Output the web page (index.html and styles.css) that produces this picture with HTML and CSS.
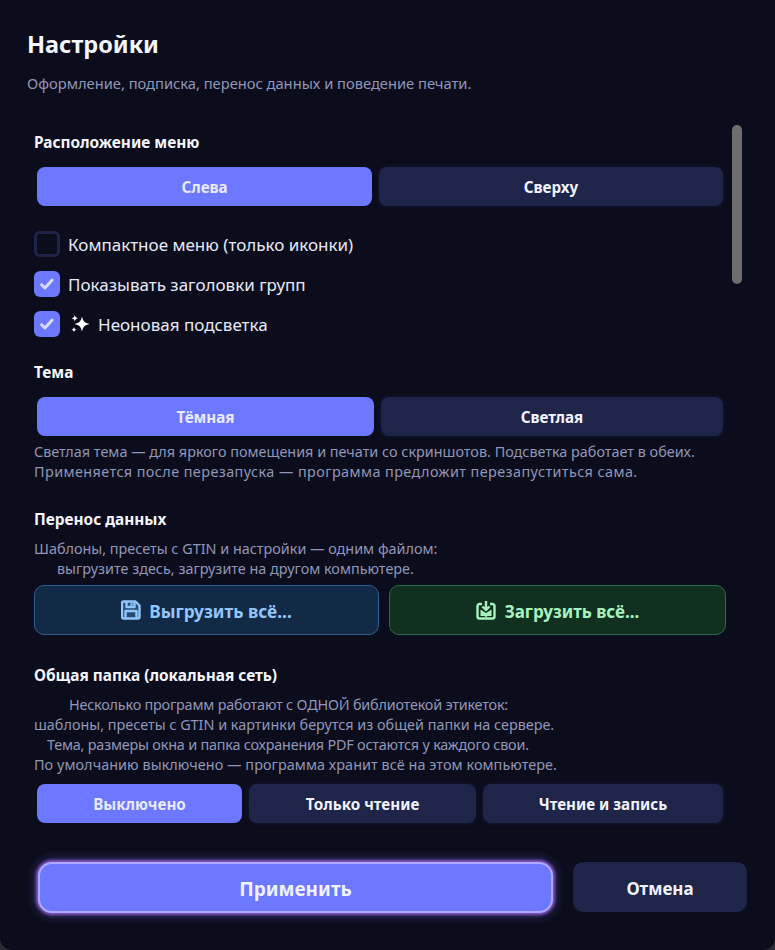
FILE: index.html
```html
<!DOCTYPE html>
<html lang="ru">
<head>
  <meta charset="UTF-8">
  <meta name="viewport" content="width=device-width, initial-scale=1.0">
  <title>Настройки</title>
  <link rel="stylesheet" href="styles.css">
</head>
<body>
  <div class="dialog">
    <div class="dialog-header">
      <h1>Настройки</h1>
      <p>Оформление, подписка, перенос данных и поведение печати.</p>
    </div>

    <div class="dialog-body">
      <div class="scroll-thumb"></div>

      <div class="section section-menu">
        <h2>Расположение меню</h2>
        <div class="segment segment-menu">
          <button class="seg-btn active">Слева</button>
          <button class="seg-btn">Сверху</button>
        </div>
        <div class="checks">
          <label class="check"><span class="box"></span>Компактное меню (только иконки)</label>
          <label class="check"><span class="box checked"><svg viewBox="0 0 16 16"><path d="M3.200 8.600l3 3 6.400-7.200"/></svg></span>Показывать заголовки групп</label>
          <label class="check"><span class="box checked"><svg viewBox="0 0 16 16"><path d="M3.200 8.600l3 3 6.400-7.200"/></svg></span><svg class="sparkle" viewBox="0 0 20 20"><path d="M12 2.500c.9 4.600 2.900 6.600 7.500 7.500-4.600.9-6.600 2.900-7.500 7.500-.9-4.600-2.900-6.600-7.500-7.500 4.600-.9 6.600-2.900 7.500-7.500z"/><path d="M4.800 1c.4 2 1.200 2.800 3.200 3.200-2 .4-2.800 1.200-3.200 3.200-.4-2-1.200-2.800-3.200-3.200 2-.4 2.800-1.200 3.200-3.200z"/><path d="M4 13c.3 1.700 1 2.400 2.700 2.700-1.700.3-2.400 1-2.700 2.700-.3-1.700-1-2.400-2.700-2.700 1.700-.3 2.400-1 2.700-2.700z"/></svg>Неоновая подсветка</label>
        </div>
      </div>

      <div class="section section-theme">
        <h2>Тема</h2>
        <div class="segment segment-theme">
          <button class="seg-btn active">Тёмная</button>
          <button class="seg-btn">Светлая</button>
        </div>
        <p class="hint">Светлая тема — для яркого помещения и печати со скриншотов. Подсветка работает в обеих.<span class="line spread">Применяется после перезапуска — программа предложит перезапуститься сама.</span></p>
      </div>

      <div class="section section-transfer">
        <h2>Перенос данных</h2>
        <p class="hint">Шаблоны, пресеты с GTIN и настройки — одним файлом:<span class="line indent-23">выгрузите здесь, загрузите на другом компьютере.</span></p>
        <div class="transfer">
          <button class="transfer-btn export">
            <svg viewBox="0 0 20 20"><path class="tint" d="M2.500 1.500h12l4 4v11.500a1.500 1.500 0 0 1-1.500 1.500H2.500A1.500 1.500 0 0 1 1 17V3a1.500 1.500 0 0 1 1.500-1.500z"/><path d="M5.500 2v5h8V2M10.500 3.200v2.400M4.500 18v-7h11v7"/></svg>
            Выгрузить всё...
          </button>
          <button class="transfer-btn import">
            <svg viewBox="0 0 20 20"><path d="M6 4H3.500A2 2 0 0 0 1.500 6v10.500a2 2 0 0 0 2 2h13a2 2 0 0 0 2-2V6a2 2 0 0 0-2-2H14"/><path d="M10 1v8M6.500 6.500l3.500 3.500 3.500-3.500"/><path class="solid" d="M4.500 9.500l3 2 2.500 1.500 2.500-1.500 3-2v6.500h-4l-1.500 1.200-1.500-1.200h-4z"/></svg>
            Загрузить всё...
          </button>
        </div>
      </div>

      <div class="section section-shared">
        <h2>Общая папка (локальная сеть)</h2>
        <p class="hint hint-shared">
          <span class="line indent-35 tight">Несколько программ работают с ОДНОЙ библиотекой этикеток:</span>
          <span class="line">шаблоны, пресеты с GTIN и картинки берутся из общей папки на сервере.</span>
          <span class="line indent-13 tight">Тема, размеры окна и папка сохранения PDF остаются у каждого свои.</span>
          <span class="line loose">По умолчанию выключено — программа хранит всё на этом компьютере.</span>
        </p>
        <div class="segment segment-shared">
          <button class="seg-btn active">Выключено</button>
          <button class="seg-btn">Только чтение</button>
          <button class="seg-btn">Чтение и запись</button>
        </div>
      </div>
    </div>

    <div class="dialog-footer">
      <button class="apply-btn">Применить</button>
      <button class="cancel-btn">Отмена</button>
    </div>
  </div>
</body>
</html>
```

FILE: styles.css
```css
html, body {
  height: 100%;
}
body {
  margin: 0;
  background: #2b2c33;
  font-family: "Noto Sans", "Open Sans", sans-serif;
  color: #f1f2ff;
}
.dialog {
  height: 950px;
  box-sizing: border-box;
  background: #0b0d1c;
  border-radius: 0 0 12px 12px;
  overflow: hidden;
}
.dialog-header {
  padding: 27px 27px 0;
}
.dialog-header h1 {
  margin: 0;
  font-size: 23.5px;
  line-height: 34px;
  font-weight: 700;
  color: #f5f6ff;
}
.dialog-header p {
  margin: 12px 0 0;
  font-size: 14.7px;
  line-height: 20px;
  color: #9196b8;
}
.dialog-body {
  position: relative;
  padding: 0 49px 0 34px;
}
.scroll-thumb {
  position: absolute;
  top: 32px;
  right: 33px;
  width: 10px;
  height: 159px;
  border-radius: 5px;
  background: #6e6e6e;
}
h2 {
  margin: 0;
  font-size: 15.4px;
  line-height: 20px;
  font-weight: 700;
  color: #f5f6ff;
}
.section-menu {
  padding-top: 40px;
}
.section-theme {
  padding-top: 26px;
}
.section-transfer {
  padding-top: 28px;
}
.section-shared {
  padding-top: 31px;
}
.segment {
  display: grid;
  gap: 7px;
  margin-left: 3px;
  margin-right: 3px;
}
.segment-menu {
  grid-template-columns: 335px 344px;
  margin-top: 14px;
}
.segment-theme {
  grid-template-columns: 337px 342px;
  margin-top: 14px;
}
.segment-shared {
  grid-template-columns: 205px 227px 240px;
  margin-top: 9px;
}
.seg-btn {
  height: 39px;
  padding: 0;
  border: none;
  border-radius: 8px;
  background: #1f2548;
  box-shadow: 0 0 5px #131838;
  font-family: inherit;
  font-size: 15.2px;
  font-weight: 700;
  color: #f1f2ff;
}
.seg-btn.active {
  background: #6c78ff;
  box-shadow: none;
  color: #e8eaff;
}
.checks {
  display: flex;
  flex-direction: column;
  gap: 14px;
  margin-top: 25px;
}
.check {
  display: flex;
  align-items: center;
  height: 26px;
  font-size: 17px;
  color: #e8e9f8;
}
.box {
  box-sizing: border-box;
  flex: none;
  width: 26px;
  height: 26px;
  margin-right: 8px;
  border: 3px solid #1f2548;
  border-radius: 6px;
}
.box.checked {
  display: flex;
  align-items: center;
  justify-content: center;
  border: none;
  background: #6c78ff;
}
.box svg {
  width: 18px;
  height: 18px;
  fill: none;
  stroke: #d8dcff;
  stroke-width: 2.600;
  stroke-linecap: round;
  stroke-linejoin: round;
}
.sparkle {
  flex: none;
  width: 20px;
  height: 20px;
  margin: 0 8px 0 2px;
  fill: #fff;
}
.hint {
  margin: 0;
  font-size: 14.4px;
  line-height: 20px;
  color: #9196b8;
}
.section-theme .hint {
  margin-top: 6px;
}
.section-transfer .hint {
  margin-top: 9px;
}
.hint-shared {
  margin-top: 9px;
}
.line {
  display: block;
}
.spread {
  letter-spacing: 0.42px;
}
.tight {
  letter-spacing: -0.2px;
}
.loose {
  letter-spacing: 0.06px;
}
.indent-13 {
  padding-left: 13px;
}
.indent-23 {
  padding-left: 23px;
}
.indent-35 {
  padding-left: 35px;
}
.transfer {
  display: grid;
  grid-template-columns: 345px 337px;
  gap: 10px;
  margin-top: 6px;
}
.transfer-btn {
  display: flex;
  align-items: center;
  justify-content: center;
  gap: 8px;
  height: 50px;
  padding: 2px 0 0;
  border-radius: 10px;
  font-family: inherit;
  font-size: 17.300px;
  font-weight: 700;
}
.transfer-btn svg {
  flex: none;
  width: 20px;
  height: 20px;
  margin-top: -2px;
  fill: none;
  stroke-width: 2.400;
  stroke-linejoin: round;
}
.export {
  background: #122a45;
  border: 1px solid #2f5f92;
  color: #93c5fd;
}
.export svg {
  stroke: #93c5fd;
}
.export .tint {
  fill: #274b73;
}
.import {
  gap: 9px;
  background: #12301f;
  border: 1px solid #2f6b45;
  color: #a7f3c0;
  font-size: 17px;
}
.import svg {
  stroke: #a7f3c0;
}
.import .solid {
  fill: #a7f3c0;
  stroke: none;
}
.dialog-footer {
  display: flex;
  align-items: flex-start;
  margin-top: 39px;
  padding: 0 28px 0 38px;
}
.apply-btn {
  box-sizing: border-box;
  width: 515px;
  height: 51px;
  margin-right: 20px;
  padding: 3px 0 0;
  border: 2px solid #b0a8ff;
  border-radius: 14px;
  background: #6c78ff;
  box-shadow: 0 0 3px 2px rgba(170, 110, 240, 0.75), 0 0 10px 4px rgba(90, 90, 200, 0.35);
  font-family: inherit;
  font-size: 19px;
  font-weight: 700;
  color: #f1f2ff;
}
.cancel-btn {
  width: 174px;
  height: 50px;
  padding: 2px 0 0;
  border: none;
  border-radius: 10px;
  background: #1f2548;
  font-family: inherit;
  font-size: 17px;
  font-weight: 700;
  color: #f1f2ff;
}
```
